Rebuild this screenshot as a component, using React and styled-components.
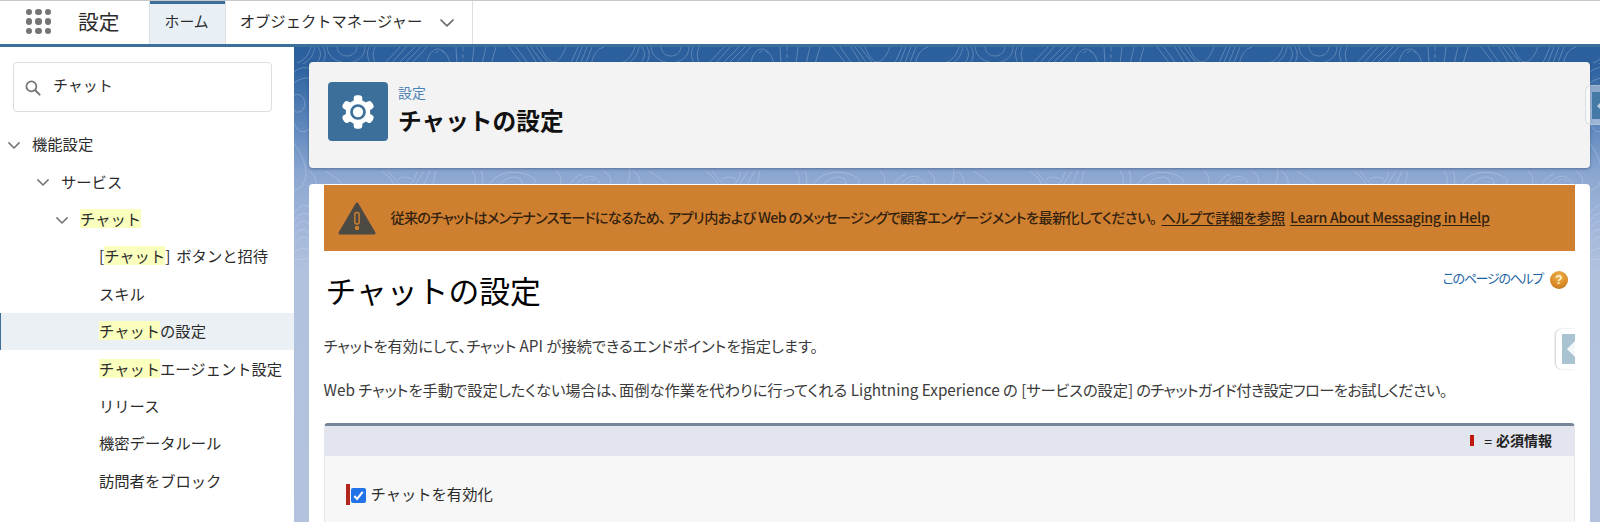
import styled, { createGlobalStyle } from "styled-components";

const tree = [
  { depth: 0, parts: ["機能設定"], open: true },
  { depth: 1, parts: ["サービス"], open: true },
  { depth: 2, parts: [{ hit: "チャット" }], open: true },
  { depth: 3, parts: ["[", { hit: "チャット" }, "] ボタンと招待"] },
  { depth: 3, parts: ["スキル"] },
  { depth: 3, parts: [{ hit: "チャット" }, "の設定"], active: true },
  { depth: 3, parts: [{ hit: "チャット" }, "エージェント設定"] },
  { depth: 3, parts: ["リリース"] },
  { depth: 3, parts: ["機密データルール"] },
  { depth: 3, parts: ["訪問者をブロック"] },
];

const indents = [32, 61, 80, 99];

function Chevron({ size = 12, color = "#747474" }) {
  return (
    <svg width={size} height={size * 0.6} viewBox="0 0 12 7.2" fill="none">
      <path d="M0.9 0.9 L6 6 L11.1 0.9" stroke={color} strokeWidth="1.5" strokeLinecap="round" strokeLinejoin="round" />
    </svg>
  );
}

function Gear() {
  const teeth = [0, 60, 120, 180, 240, 300];
  return (
    <svg width="34" height="34" viewBox="-17 -17 34 34" fill="#fff">
      {teeth.map((angle) => (
        <rect key={angle} x="-4.3" y="-16.8" width="8.6" height="12" rx="3.2" transform={`rotate(${angle})`} />
      ))}
      <circle r="12.2" />
      <circle r="6.5" fill="none" stroke="#3c709b" strokeWidth="2.7" />
    </svg>
  );
}

function Contours() {
  return (
    <ContourSvg>
      <defs>
        <pattern id="contours" width="324" height="300" patternUnits="userSpaceOnUse">
          <g fill="none" stroke="#fff" strokeWidth="1">
            <path d="M3 16Q13 13 17 0M9 17Q19 12 21 0M24 0Q30 8 22 17M29 0Q34 8 28 17" />
            <path d="M33 0C35 21 71 21 71 0M43 0C44 12 62 12 63 0M75 0Q71 8 77 18M81 0Q77 8 82 18" />
            <path d="M90 17L106 0M97 17L112 0M104 17L121 0M110 17L127 0M117 17L133 0" />
            <path d="M133 17C135 -3 152 -3 156 17M162 0L163 17M180 0L178 17M192 0L188 17M202 0L197 17" />
            <path d="M141 6Q147 1 151 7M169 0L169 17" strokeDasharray="4 3" />
            <path d="M215 0L229 18M222 0L235 18M233 0L244 18M237 0L250 18M242 0L256 18" />
            <path d="M247 0C255 20 264 20 272 0M276 18L284 0M281 18L288 0M286 18L293 0M291 18L298 0M297 18Q300 2 310 0" />
            <path d="M0 48C12 44 15 64 4 65Q0 66 0 62M0 76Q5 90 16 82M0 25Q8 18 17 22M0 36Q8 30 17 31" />
            <path d="M0 96Q13 115 12 128Q10 141 0 144M15 124Q25 130 21 141M31 124Q45 132 51 140" />
            <path d="M87 124Q101 132 100 142M94 124Q105 138 111 142M104 132Q110 128 118 132M110 141Q119 139 123 125M119 141L130 124M128 141L136 124M138 141L142 124" />
            <path d="M178 124Q185 133 178 142M187 124Q191 134 187 142M193 142C202 120 230 123 241 132Q242 139 234 142M203 142Q208 130 222 130Q233 133 225 142" />
            <path d="M262 124Q271 132 264 142M274 142Q278 130 288 127M281 142C286 125 307 125 307 142M310 124Q322 132 313 142" />
            <path d="M288 139Q294 128 303 135" strokeDasharray="4 2" />
            <path d="M0 166Q10 152 18 163M0 174Q10 159 18 172M0 181Q10 167 18 181M0 188Q10 176 18 189M0 196Q10 184 18 196M0 205Q8 198 18 205M0 213L18 211" />
          </g>
        </pattern>
        <linearGradient id="fade" x1="0" y1="0" x2="0" y2="1">
          <stop offset="0" stopColor="#fff" stopOpacity="0.24" />
          <stop offset="1" stopColor="#fff" stopOpacity="0.18" />
        </linearGradient>
        <mask id="fadeMask">
          <rect width="1306" height="240" fill="url(#fade)" />
        </mask>
      </defs>
      <rect width="1306" height="240" fill="url(#contours)" mask="url(#fadeMask)" />
    </ContourSvg>
  );
}

function TopBar() {
  return (
    <Header>
      <Launcher>
        {Array.from({ length: 9 }, (_, i) => (
          <Dot key={i} />
        ))}
      </Launcher>
      <AppName>設定</AppName>
      <Tab $active>ホーム</Tab>
      <Tab>
        <TabLabel>オブジェクトマネージャー</TabLabel>
        <Chevron size={14} />
      </Tab>
    </Header>
  );
}

function Sidebar() {
  return (
    <Side>
      <SearchBox>
        <svg width="16" height="16" viewBox="0 0 16 16" fill="none" stroke="#747474" strokeLinecap="round">
          <circle cx="6.4" cy="6.4" r="5" strokeWidth="1.7" />
          <path d="M10.3 10.3L14.6 14.6" strokeWidth="2" />
        </svg>
        <span>チャット</span>
      </SearchBox>
      <nav>
        {tree.map((item, i) => (
          <TreeRow key={i} $indent={indents[item.depth]} $active={item.active}>
            {item.open && (
              <Toggle>
                <Chevron />
              </Toggle>
            )}
            <TreeLabel>
              {item.parts.map((part, j) =>
                part.hit ? <Mark key={j}>{part.hit}</Mark> : part
              )}
            </TreeLabel>
          </TreeRow>
        ))}
      </nav>
    </Side>
  );
}

export default function App() {
  return (
    <Page>
      <GlobalStyle />
      <TopBar />
      <Body>
        <Sidebar />
        <Main>
          <Contours />
          <TitleCard>
            <IconTile>
              <Gear />
            </IconTile>
            <TitleText>
              <Eyebrow>設定</Eyebrow>
              <Title>チャットの設定</Title>
            </TitleText>
            <EdgeTab>
              <span />
            </EdgeTab>
          </TitleCard>
          <Content>
            <Banner>
              <svg width="38" height="33" viewBox="0 0 38 33">
                <path d="M19 2L36 31H2Z" fill="#4c4a43" stroke="#4c4a43" strokeWidth="3" strokeLinejoin="round" />
                <rect x="16.8" y="10.5" width="4.4" height="11.5" rx="2" fill="none" stroke="#cf7f30" strokeWidth="1.4" />
                <circle cx="19" cy="26" r="2.2" fill="#cf7f30" />
              </svg>
              <BannerText>
                <Fit $gap="-0.79px">従来のチャットはメンテナンスモードになるため</Fit>
                <Fit $gap="-0.6px">、 アプリ内および Web のメッセージングで顧客エンゲージメントを最新化してください。</Fit>
                <BannerLink>ヘルプで詳細を参照</BannerLink>
                <BannerLink $gap="-0.28px">Learn About Messaging in Help</BannerLink>
              </BannerText>
            </Banner>
            <HeadingRow>
              <Heading>チャットの設定</Heading>
              <HelpLink>
                <Fit $gap="-1.3px">このページのヘルプ</Fit>
                <HelpIcon>?</HelpIcon>
              </HelpLink>
            </HeadingRow>
            <Description>
              <Fit $gap="-0.03px">チャットを有効にして、チャット API が接続できるエンドポイントを指定します。</Fit>
              <SlideTab>
                <span />
              </SlideTab>
            </Description>
            <Description>
              <Fit>Web チャットを手動で設定したくない場合は、面倒な作業を代わりに行ってくれる Lightning Experience の </Fit>
              <Fit $gap="-0.15px">[サービスの設定] </Fit>
              <Fit $gap="-0.63px">のチャットガイド付き設定フローをお試しください。</Fit>
            </Description>
            <Block>
              <BlockHeader>
                <RequiredMark />
                <Equals>=</Equals>
                <RequiredText>必須情報</RequiredText>
              </BlockHeader>
              <BlockBody>
                <RequiredBar />
                <Check>
                  <svg width="15" height="15" viewBox="0 0 15 15" fill="none">
                    <path d="M3.3 8.1L6.1 11L11.7 3.9" stroke="#fff" strokeWidth="2.1" />
                  </svg>
                </Check>
                <CheckLabel>チャットを有効化</CheckLabel>
              </BlockBody>
            </Block>
          </Content>
        </Main>
      </Body>
    </Page>
  );
}

const GlobalStyle = createGlobalStyle`
  * {
    box-sizing: border-box;
  }
  body {
    margin: 0;
    overflow: hidden;
    background: #fff;
    color: #2b2b2b;
    font-family: "Noto Sans CJK JP", sans-serif;
  }
  svg {
    flex: none;
    display: block;
  }
`;

const Page = styled.div`
  height: 522px;
  display: flex;
  flex-direction: column;
  overflow: hidden;
`;

const Header = styled.header`
  height: 47px;
  flex: none;
  display: flex;
  border-top: 1px solid #c9c9c9;
  border-bottom: 3px solid #3c709b;
`;

const Launcher = styled.div`
  width: 78px;
  padding: 8px 0 0 26px;
  display: grid;
  grid-template-columns: repeat(3, 6.4px);
  grid-auto-rows: 6.4px;
  gap: 3.1px;
`;

const Dot = styled.i`
  border-radius: 50%;
  background: #747474;
`;

const AppName = styled.div`
  width: 71px;
  font-size: 20.7px;
  line-height: 40px;
`;

const Tab = styled.div`
  display: flex;
  align-items: center;
  height: 43px;
  padding: ${({ $active }) => ($active ? "0 16.5px 4px 14.5px" : "0 18px 4px 13.5px")};
  font-size: 14.9px;
  background: ${({ $active }) => ($active ? "#e8f0f5" : "#fff")};
  box-shadow: ${({ $active }) => ($active ? "inset 0 3px 0 #3c709b" : "none")};
  border-left: ${({ $active }) => ($active ? "1px solid #d8dfe4" : "none")};
  border-right: 1px solid #dfdfdf;
  svg {
    margin: 5px 0 0 18px;
  }
`;

const TabLabel = styled.span`
  padding-bottom: 1px;
  font-size: 15.3px;
`;

const Body = styled.div`
  flex: 1;
  display: flex;
  min-height: 0;
`;

const Side = styled.aside`
  width: 294px;
  flex: none;
  font-size: 15.3px;
`;

const SearchBox = styled.div`
  display: flex;
  align-items: center;
  gap: 12px;
  width: 259px;
  height: 50px;
  margin: 15px 0 14px 13px;
  padding-left: 11px;
  border: 1px solid #dedede;
  border-radius: 4px;
  font-size: 15px;
  svg {
    margin-top: 2px;
  }
  span {
    padding-bottom: 5px;
  }
`;

const TreeRow = styled.div`
  display: flex;
  align-items: center;
  height: 37.4px;
  padding-left: ${({ $indent, $active }) => $indent - ($active ? 1 : 0)}px;
  line-height: 19px;
  white-space: nowrap;
  background: ${({ $active }) => ($active ? "#ebf0f4" : "transparent")};
  border-left: ${({ $active }) => ($active ? "1px solid #3c709b" : "none")};
`;

const TreeLabel = styled.span`
  padding-bottom: 2px;
  word-spacing: 2.5px;
`;

const Toggle = styled.span`
  width: 24px;
  margin: 2px 0 0 -24px;
`;

const Mark = styled.mark`
  color: inherit;
  background: #faffbd;
  display: inline-block;
`;

const Main = styled.main`
  position: relative;
  flex: 1;
  min-width: 0;
  padding: 15px 10px 0 14.5px;
  display: flex;
  flex-direction: column;
  gap: 16px;
  background: linear-gradient(#2a5e9c 0, #2d629f 20px, #5b85bb 75px, #89a6d0 125px, #9fb4d9 170px, #b1c2de 225px, #b3c3de 100%);
`;

const ContourSvg = styled.svg`
  position: absolute;
  top: 0;
  left: 0;
  width: 1306px;
  height: 240px;
`;

const TitleCard = styled.section`
  position: relative;
  display: flex;
  gap: 10px;
  height: 106px;
  flex: none;
  padding: 20px 0 0 19.5px;
  border-radius: 4px;
  background: #f3f3f3;
  box-shadow: 0 1px 3px rgba(30, 50, 90, 0.45);
`;

const IconTile = styled.div`
  width: 60px;
  height: 59px;
  display: flex;
  align-items: center;
  justify-content: center;
  border-radius: 4px;
  background: #3c709b;
`;

const TitleText = styled.div`
  display: flex;
  flex-direction: column;
`;

const Eyebrow = styled.span`
  font-size: 13.9px;
  line-height: 21px;
  color: #4b84b4;
`;

const Title = styled.h1`
  margin: 0;
  font-size: 23.7px;
  line-height: 34px;
  font-weight: 700;
  color: #111;
`;

/* handle cut off by the right edge of the window */
const EdgeTab = styled.div`
  position: absolute;
  top: 23px;
  right: -11px;
  width: 16px;
  height: 40px;
  padding: 6px 0 5px 6px;
  border: 1px solid rgba(190, 200, 210, 0.5);
  border-right: none;
  border-radius: 6px 0 0 6px;
  background: rgba(255, 255, 255, 0.4);
  span {
    display: flex;
    align-items: center;
    justify-content: flex-end;
    height: 100%;
    background: #447aa5;
  }
  span::after {
    content: "";
    border: 4px solid transparent;
    border-left: 0;
    border-right: 4px solid #b9cddd;
  }
`;

const Content = styled.section`
  position: relative;
  flex: 1;
  padding: 1px 15px 0;
  border-radius: 4px 4px 0 0;
  background: #fff;
`;

const Banner = styled.div`
  display: flex;
  align-items: center;
  gap: 15px;
  height: 66px;
  padding-left: 14px;
  background: #cf7f30;
`;

const BannerText = styled.div`
  display: flex;
  padding-bottom: 3px;
  font-size: 14.2px;
  font-weight: 500;
  color: #33220f;
  white-space: nowrap;
`;

const Fit = styled.span`
  font-feature-settings: "palt";
  letter-spacing: ${({ $gap }) => $gap || "0"};
`;

const BannerLink = styled.a`
  margin-left: 5px;
  text-decoration: underline;
  text-underline-offset: 2px;
  font-feature-settings: "palt";
  letter-spacing: ${({ $gap }) => $gap || "0"};
`;

const HeadingRow = styled.div`
  display: flex;
  justify-content: space-between;
  padding: 16px 7px 0 2px;
  height: 76px;
`;

const Heading = styled.h2`
  margin: 0;
  font-size: 30.8px;
  line-height: 46px;
  font-weight: 400;
  color: #000;
`;

const HelpLink = styled.a`
  display: flex;
  gap: 7px;
  height: 20px;
  align-items: center;
  font-size: 13px;
  color: #1d64a5;
`;

const HelpIcon = styled.span`
  width: 18px;
  height: 18px;
  margin-top: 5px;
  border-radius: 50%;
  background: radial-gradient(circle at 50% 30%, #eeb14f, #d98a25 60%, #a96b28);
  color: #fff3cf;
  font: 700 12px/18px "Liberation Sans", sans-serif;
  text-align: center;
`;

const Description = styled.p`
  position: relative;
  margin: 0;
  height: 44px;
  line-height: 36px;
  font-size: 15.3px;
  color: #3b3b3b;
  white-space: pre;
`;

const SlideTab = styled.div`
  position: absolute;
  top: 2px;
  right: 0;
  width: 19px;
  height: 40px;
  padding: 5px 0 5px 6px;
  border-radius: 6px 0 0 6px;
  background: #fff;
  box-shadow: -1px 0 2px rgba(0, 0, 0, 0.2);
  clip-path: inset(-3px 0 -3px -4px);
  span {
    display: flex;
    justify-content: flex-end;
    align-items: center;
    height: 100%;
    background: #a9c3d0;
  }
  span::after {
    content: "";
    border: 8px solid transparent;
    border-left: 0;
    border-right: 8px solid #f4f8fa;
  }
`;

const Block = styled.div`
  height: 120px;
  margin-top: 8px;
  border: 1px solid #e6e6ea;
  border-top: 3px solid #74859a;
  border-radius: 4px 4px 0 0;
  background: #f7f7f7;
`;

const BlockHeader = styled.div`
  display: flex;
  align-items: center;
  justify-content: flex-end;
  height: 30px;
  padding: 0 22px 0 0;
  background: #e2e5ee;
  font-size: 14px;
  color: #222;
`;

const RequiredMark = styled.i`
  width: 4px;
  height: 11px;
  margin: 0 10px 1px 0;
  background: #c0190f;
`;

const Equals = styled.span`
  margin-right: 4px;
`;

const RequiredText = styled.strong`
  padding-bottom: 2px;
`;

const BlockBody = styled.div`
  display: flex;
  align-items: center;
  padding: 27px 0 0 21px;
  font-size: 15.3px;
  line-height: 20px;
`;

const RequiredBar = styled.i`
  width: 4px;
  height: 21px;
  background: #b3261e;
`;

const Check = styled.span`
  width: 15px;
  height: 15px;
  margin: 1px 5px 0 1px;
  border-radius: 2px;
  background: #2273e8;
`;

const CheckLabel = styled.span`
  padding-bottom: 3px;
`;
